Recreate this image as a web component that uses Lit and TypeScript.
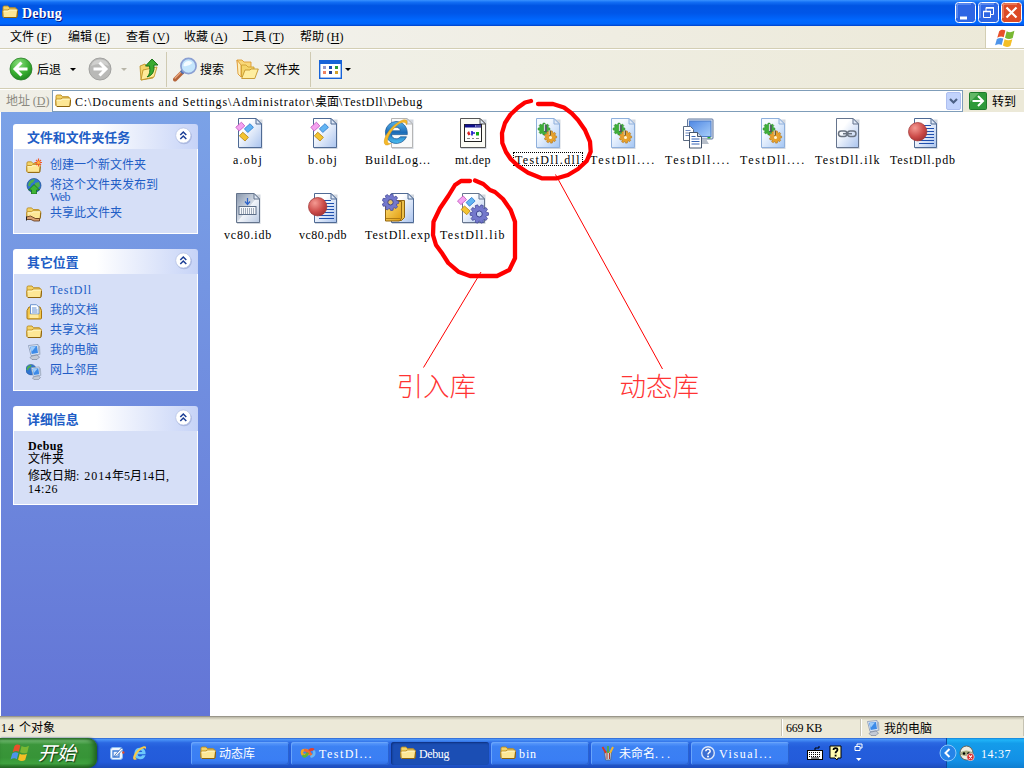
import { LitElement, html, svg, css, TemplateResult } from "lit";
import { customElement, property } from "lit/decorators.js";
import { classMap } from "lit/directives/class-map.js";

const pen = document.createElement("canvas").getContext("2d")!;

/* Half-width characters sit on a fixed cell; the spacing is derived from the natural width. */
function spacing(run: string, size: number, cell: number, bold: boolean): string {
  pen.font = `${bold ? "bold " : ""}${size}px "Liberation Serif"`;
  const n = run.length;
  return `letter-spacing:${((cell * n - pen.measureText(run).width) / n).toFixed(3)}px`;
}

function txt(text: string, size = 12, cell = 6, bold = false) {
  const runs = text.match(/[\x20-\x7e]+|[^\x20-\x7e]+/g) ?? [];
  return html`<span class="txt">${runs.map((r) =>
    /[\x20-\x7e]/.test(r) ? html`<span class="lat" style=${spacing(r, size, cell, bold)}>${r}</span>` : r
  )}</span>`;
}

const textStyles = css`
  .txt { white-space: pre; }
  .lat { font-family: "Liberation Serif", serif; }
  svg { display: block; flex: none; }
`;

function gear(cx: number, cy: number, r: number, teeth: number): string {
  const pts: string[] = [];
  for (let i = 0; i < teeth; i++) {
    const a = (i * 2 * Math.PI) / teeth;
    const s = Math.PI / teeth;
    for (const [o, k] of [[-0.75, 0.78], [-0.42, 1], [0.42, 1], [0.75, 0.78]]) {
      pts.push(`${(cx + Math.cos(a + o * s) * r * k).toFixed(2)},${(cy + Math.sin(a + o * s) * r * k).toFixed(2)}`);
    }
  }
  return pts.join(" ");
}

const page = (x: number, w = 23, tint = "url(#pg)", edge = "#4f6a94") => svg`
  <path d="M${x + 1} 2.5H${x + w + 1.5}V32H${x + 1}z" fill="#9aa5b5" opacity=".45"/>
  <path d="M${x + 0.5} 1.5H${x + w - 5}L${x + w + 0.5} 7V30.5H${x + 0.5}z" fill=${tint} stroke=${edge}/>
  <path d="M${x + w - 5} 1.5V7H${x + w + 0.5}z" fill="#dfe8f6" stroke=${edge}/>`;

const blocks = (x: number, y: number) => svg`
  <g stroke-width=".8">
    <rect x="-3.800" y="-2.500" width="7.600" height="5" fill="#f4a2f0" stroke="#c45cc0" transform="translate(${x + 1} ${y}) rotate(-42)"/>
    <rect x="-3.800" y="-2.500" width="7.600" height="5" fill="#62b4f2" stroke="#2f7ed0" transform="translate(${x + 9.6} ${y + 1.5}) rotate(-42)"/>
    <rect x="-3.800" y="-2.500" width="7.600" height="5" fill="#f4c430" stroke="#b8881c" transform="translate(${x + 4.6} ${y + 10}) rotate(42)"/>
  </g>`;

const dllArt = svg`
  ${page(4, 23, "url(#pgb)", "#8fb0dc")}
  <polygon points=${gear(12, 12, 6, 8)} fill="#3fae3a" stroke="#2c8a30" stroke-width=".5"/>
  <polygon points=${gear(18.5, 20, 6.2, 9)} fill="#e6a02c" stroke="#a66c14" stroke-width=".5"/>
  <circle cx="18.500" cy="20.500" r="1.500" fill="#fff6d8"/>
  <path d="M13.500 8v7" stroke="#4a5560" stroke-width="2.500"/><path d="M12.500 7v7" stroke="#d0d6dc" stroke-width="1.200"/>
  <path d="M18 13.500v5" stroke="#6e5c34" stroke-width="2"/><path d="M17.300 13.500v4.500" stroke="#e4d8b8"/>`;

const pdbArt = svg`
  ${page(7, 22)}
  <path d="M17 8.500h7M17 11.500h10M17 14.500h10M17 17.500h10M17 20.500h10M12 23.500h15M12 26.500h15" stroke="#1f4fae" stroke-width="1.200"/>
  <circle cx="10.700" cy="14.700" r="9.200" fill="url(#red)" stroke="#a33a3a" stroke-width=".8"/>`;

const fileArt: Record<string, TemplateResult> = {
  obj: svg`${page(6)}${blocks(7.3, 9.6)}`,
  html: svg`
    ${page(9, 21, "#fafafa", "#b5b5b5")}
    <path fill-rule="evenodd" d="M14 4.500a11 11 0 1 0 10.500 15.300h-6.200c-1.200 1.500-2.500 2-4.200 2-2.600 0-4.400-1.700-4.600-4.200h15.800c.5-8-4.600-13.100-11.300-13.100zm-4.500 9.300c.5-2.200 2.200-3.600 4.500-3.600s4 1.400 4.400 3.600z" fill="url(#ie)" stroke="#14508e" stroke-width=".7"/>
    <path d="M24.500 8c2-5-1-7-7-3.500C9 9 .5 21 2.500 26.500c1 2.500 4 1.500 6.500 0C3.500 27.500 4.500 21 11 12.500c5-6.300 12.500-10.300 13.500-4.500z" fill="#f5b92a" stroke="#cd8d10" stroke-width=".4"/>`,
  dep: svg`
    ${page(3, 25, "#fbfbf5", "#555")}
    <rect x="7.500" y="7.500" width="17" height="17" fill="#fff" stroke="#222"/>
    <path d="M8 9h16" stroke="#10108c" stroke-width="3"/><path d="M18 9h1.500M20.500 9h1M22.500 9h1" stroke="#fff"/>
    <path d="M10 16l2-2 1.500 3.500-2 1z" fill="#d22"/><path d="M15 14v4.500M15 16h3" stroke="#22c" stroke-width="1.700"/><path d="M19 15h3v3.500h-3z" fill="#1a1"/>
    <path d="M10 21.500h3M15 21.500h2M19 21.500h3" stroke="#888"/>`,
  dll: dllArt,
  mon: svg`
    <rect x="5.500" y="2" width="25.500" height="20" rx="1" fill="#dfe6f2" stroke="#60789f"/>
    <rect x="7.500" y="4" width="21.500" height="15.500" fill="url(#scr)" stroke="#4d7cc8"/>
    <path d="M25.500 20.700h3" stroke="#2ea82e" stroke-width="1.500"/>
    <path d="M15 22h9l3 5h-12z" fill="#b7bfca"/>
    <path d="M1.500 9.500h7l3 3v11h-10z" fill="#fff" stroke="#5b6b82"/><path d="M3.500 13.500h5M3.500 16h6M3.500 18.500h6" stroke="#6d87bc"/>
    <path d="M7.500 15.500h8l4 4v11.500h-12z" fill="#fff" stroke="#45556c"/><path d="M15.500 15.500v4h4" fill="#cdd8ea" stroke="#45556c"/>
    <path d="M9.500 19.500h4M9.500 22h8M9.500 24.500h8M9.500 27h8" stroke="#3965b4"/>`,
  ilk: svg`
    ${page(4, 22, "url(#pg)", "#66758e")}
    <g fill="none" stroke="#6a7380" stroke-width="1.500"><rect x="6.500" y="14" width="8.500" height="5.500" rx="2.700"/><rect x="15.500" y="14" width="8.500" height="5.500" rx="2.700"/><path d="M11 16.700h9"/></g>`,
  pdb: pdbArt,
  idb: svg`
    ${page(4, 23, "url(#gry)", "#64748c")}
    <rect x="7" y="14.500" width="17" height="8" fill="#f6f8fb" stroke="#5d6f88"/>
    <path d="M9 17h13M9 19h13M9 21h13" stroke="#4a5c76" stroke-dasharray="1 1"/>
    <path d="M15.500 6v6M13 9.500l2.500 3 2.500-3" fill="none" stroke="#2c62c8" stroke-width="1.200"/>`,
  exp: svg`
    ${page(9, 22)}
    <path d="M6.500 8.500h16v17l-3 3h-13z" fill="#ecc04a" stroke="#8f6512"/>
    <path d="M3.500 11.500l2-2h14v17l-2 2.500h-14z" fill="url(#gold)" stroke="#936711"/>
    <path d="M4 26.500h14.500" stroke="#b07c14"/>
    <polygon points=${gear(8.5, 10.3, 8.3, 9)} fill="#7378cc" stroke="#3d4290" stroke-width=".7"/>
    <circle cx="8.500" cy="10.300" r="2.700" fill="#e5c36a" stroke="#3d4290"/>`,
  lib: svg`
    ${page(5, 22, "url(#pg)", "#66758e")}${blocks(4, 8.3)}
    <polygon points=${gear(22.3, 22, 9.3, 10)} fill="#7378cc" stroke="#3d4290" stroke-width=".7"/>
    <circle cx="22.300" cy="22" r="3" fill="#c4d4f2" stroke="#3d4290"/>`,
};

const defs = svg`<defs>
  <linearGradient id="pg" x1="0" y1="0" x2="1" y2="1"><stop offset=".3" stop-color="#fff"/><stop offset="1" stop-color="#a9c3ee"/></linearGradient>
  <linearGradient id="pgb" x1="0" y1="0" x2="1" y2="1"><stop offset=".3" stop-color="#f6faff"/><stop offset="1" stop-color="#a4c6f4"/></linearGradient>
  <linearGradient id="gry" x1="0" y1="0" x2="1" y2="1"><stop offset="0" stop-color="#8695ac"/><stop offset=".5" stop-color="#d3dae4"/><stop offset=".52" stop-color="#f2f5fa"/><stop offset="1" stop-color="#b9c9e2"/></linearGradient>
  <linearGradient id="gold" x1="0" y1="0" x2="1" y2="1"><stop offset="0" stop-color="#ffe27a"/><stop offset="1" stop-color="#e09a0c"/></linearGradient>
  <linearGradient id="ie" x1="0" y1="0" x2="0" y2="1"><stop offset="0" stop-color="#58b4ec"/><stop offset=".5" stop-color="#1c6cb8"/><stop offset="1" stop-color="#4cc0f2"/></linearGradient>
  <linearGradient id="scr" x1="0" y1="0" x2="1" y2="1"><stop offset="0" stop-color="#4f88e4"/><stop offset="1" stop-color="#a8cefa"/></linearGradient>
  <radialGradient id="red" cx=".35" cy=".3" r=".8"><stop offset="0" stop-color="#f49a92"/><stop offset=".6" stop-color="#cc4b49"/><stop offset="1" stop-color="#9e2e30"/></radialGradient>
</defs>`;

const folder = svg`
  <path d="M1 12.500V3.300Q1 2 2.200 2H6l1.500 1.700h5.500q1.200 0 1.200 1.200V7H1z" fill="#f4d366" stroke="#b98a20" stroke-width=".9"/>
  <path d="M.8 7.200q0-1.200 1.200-1.200h4l1-1h7.300q1.200 0 1.200 1.200l-.6 6.300q-.1 1-1.100 1H2.300q-1 0-1.100-1z" fill="#fde795" stroke="#b98a20" stroke-width=".9"/>
  <path d="M1.800 7.200h4.700l1-1h7" fill="none" stroke="#fff8cc" stroke-width=".9"/>
  <path d="M2 13.500h12.200q.8 0 .9-1l.5-5.500" fill="none" stroke="#8e640c"/>`;

const flag = svg`
  <path d="M3.500 3.200C5.500 1.500 7 2 8.300 2.800L7 8C5.500 7 4 7.200 2 8.300z" fill="#e8502a"/>
  <path d="M9.300 3.300c2 1 3.500 1 6-.3L14 8.500c-2 1-4 1-6-.2z" fill="#79b833"/>
  <path d="M1.700 9.300C3.500 8.200 5 8.200 6.700 9L5.400 14C4 13 2.500 13 .3 14.200z" fill="#4d94ea"/>
  <path d="M7.700 9.500c2 1 3.700 1 6 0l-1.500 5.200c-2 1-3.700 1-5.800-.3z" fill="#f4bf25"/>`;

const computer = svg`
  <path d="M2.500 1.500l9.500-1 1.500 10-8.500 1z" fill="#e4ecf8" stroke="#8496b4" stroke-width=".8"/>
  <path d="M4 2.700l7-.7 1 7-6.300.9z" fill="#3d8be8"/><path d="M4.500 3l5.500-.5-4.500 5.500z" fill="#9ccbfa"/>
  <path d="M12 1.500l2 .5 .5 8.500-1.500 .5z" fill="#aab6ca"/>
  <path d="M6 12l5-1 2.500 2-2.500 2.500H6L4 13.500z" fill="#c3cad6" stroke="#78849a" stroke-width=".7"/>`;

const globe = svg`<circle cx="8" cy="7.500" r="7" fill="#2f74d0" stroke="#1c4f94" stroke-width=".7"/><path d="M3 4q3-3.500 6-2.500l-2 3-2 1-1 3-2-1zM9 5l4-1 1 4-3 3-2-2z" fill="#4fb04a"/>`;

const ieSmall = svg`
  <path fill-rule="evenodd" d="M8 2.800a5.700 5.700 0 1 0 5.500 7.500h-3.300q-.7 1.200-2.200 1.200-2.200 0-2.400-2.300h8C13.900 5 11.300 2.800 8 2.800zM5.700 7q.4-1.800 2.300-1.800T10.300 7z" fill="#6cc8fc"/>
  <path d="M13.500 4.500C15.500.5 12 .5 8 3 3.500 6 0 12 1.500 14.300c1 1.200 3 .2 4-.5C2.500 14 3.500 10.500 6.500 7c3-3.500 7-5 7-2.500z" fill="#f7c948"/>`;

const small: Record<string, TemplateResult> = {
  folder,
  computer,
  flag,
  ie: ieSmall,
  newf: svg`<g transform="translate(0 2) scale(.92)">${folder}</g><path d="M12.500 .5v8M8.500 4.500h8M10 2l5 5M15 2l-5 5" stroke="#f05a28" stroke-width="1.200"/><circle cx="12.500" cy="4.500" r="1.500" fill="#ffb03a"/>`,
  web: svg`${globe}<path d="M8 6.500l5.500 5.500h-3v4h-5v-4h-3z" fill="#3fb436" stroke="#177018" stroke-width=".8"/>`,
  share: svg`<g transform="scale(.95)">${folder}</g><path d="M.5 11l4-1 5 2.500h4v2.500H8l-3-1.500H.5z" fill="#d8a070" stroke="#5c3416" stroke-width=".8"/><path d="M0 10.500v4" stroke="#222" stroke-width="2"/>`,
  docs: svg`<path d="M1 6.500L3 3h11l1.500 3.500V14q0 1-1 1H2q-1 0-1-1z" fill="#f2c74e" stroke="#a8760e"/><path d="M4.500 .7h6l2.500 2.500V10h-8.500z" fill="#fff" stroke="#6d94cf"/><path d="M6 4h4.500M6 6h5.500M6 8h5.500" stroke="#5d8cd4"/><path d="M3.500 10.500h9v3.500h-9z" fill="#ffeaa0"/>`,
  net: svg`<g transform="translate(-1 0) scale(.75)">${globe}</g><g transform="translate(3 2.500) scale(.85)">${computer}</g>`,
  desk: svg`<rect x="1.500" y="2.500" width="12" height="12" rx="2.500" fill="#eef6ff" stroke="#8cbcf0"/><path d="M4 6h6v6H4z" fill="none" stroke="#3d7ed8" stroke-width="1.300"/><path d="M6 10l6.500-7 1.500 1.500-6.500 6.500-2 .5z" fill="#fff" stroke="#2d65b5" stroke-width=".8"/><circle cx="14.300" cy="7.500" r="1.200" fill="#e84c2a"/>`,
  vs: svg`<g fill="none" stroke-width="2.600" stroke-linecap="round"><path d="M7 9.500Q2.500 11 2 8T5 5t4 4" stroke="#f5a623"/><path d="M7 9q3-5.500 6-4.500" stroke="#e8402a"/><path d="M5 5q4 1 7 6" stroke="#f06a32"/><path d="M14 6.500q1 4-2.500 5" stroke="#6ab8f0"/><path d="M3.500 11q1.500 1.500 4-2.500" stroke="#58b838"/></g>`,
  paint: svg`<path d="M4.500 7h7l-.8 8H5.500z" fill="#c8d4e2" stroke="#56647a" stroke-width=".8"/><path d="M6 8L2.500 2" stroke="#d8381c" stroke-width="1.800"/><path d="M8 8V1" stroke="#4eae3c" stroke-width="1.800"/><path d="M10 8l3-6" stroke="#f5b62c" stroke-width="2"/><path d="M7 8v6M9.500 8v6" stroke="#b03a28"/>`,
  help: svg`<circle cx="8" cy="8" r="6.300" fill="#3c6fd2" stroke="#dbe7fb" stroke-width="1.400"/><path d="M5.800 6.200q.2-2 2.200-2t2.200 1.800q0 1.200-1.300 1.900Q8 8.500 8 9.500" fill="none" stroke="#fff" stroke-width="1.500"/><circle cx="8" cy="11.500" r="1" fill="#fff"/>`,
};

const ico = (name: string, size = 16) => html`<svg width=${size} height=${size} viewBox="0 0 16 16">${small[name]}</svg>`;

@customElement("task-panel")
class TaskPanel extends LitElement {
  @property() heading = "";
  static styles = [textStyles, css`
    :host { display: block; color: #215dc6; }
    .head { height: 25px; display: flex; align-items: center; justify-content: space-between; padding: 0 6px 0 14px; border-radius: 3px 3px 0 0; background: linear-gradient(90deg, #fff 0 45%, #c6d3f7 100%); font-weight: 700; font-size: 12.9px; box-sizing: border-box; }
    .body { background: #d6dff7; border: 1px solid #fff; border-top: 0; box-sizing: border-box; height: calc(100% - 25px); }
  `];
  render() {
    return html`
      <div class="head"><span>${this.heading}</span>
        <svg width="17" height="20" viewBox="0 0 17 20"><circle cx="9" cy="9.500" r="7.800" fill="#8f9fcf" opacity=".6"/><circle cx="8.300" cy="8.500" r="7.600" fill="#fff" stroke="#b8c4e4" stroke-width=".8"/><path d="M5.300 8l3-3 3 3M5.300 12l3-3 3 3" fill="none" stroke="#1a3d95" stroke-width="1.500"/></svg>
      </div>
      <div class="body"><slot></slot></div>`;
  }
}

@customElement("file-item")
class FileItem extends LitElement {
  @property() name = "";
  @property() kind = "";
  @property({ type: Boolean }) focused = false;
  static styles = [textStyles, css`
    :host { display: flex; flex-direction: column; align-items: center; }
    .label { margin-top: 3px; height: 14px; line-height: 12px; padding: 0 1px; border: 1px solid transparent; box-sizing: border-box; white-space: nowrap; }
    .on { border: 1px dotted #000; }
  `];
  render() {
    return html`<svg width="32" height="32" viewBox="0 0 32 32">${defs}${fileArt[this.kind]}</svg>
      <div class=${classMap({ label: true, on: this.focused })}>${txt(this.name)}</div>`;
  }
}

const files: [string, string][] = [
  ["a.obj", "obj"], ["b.obj", "obj"], ["BuildLog...", "html"], ["mt.dep", "dep"], ["TestDll.dll", "dll"],
  ["TestDll....", "dll"], ["TestDll....", "mon"], ["TestDll....", "dll"], ["TestDll.ilk", "ilk"], ["TestDll.pdb", "pdb"],
  ["vc80.idb", "idb"], ["vc80.pdb", "pdb"], ["TestDll.exp", "exp"], ["TestDll.lib", "lib"],
];
const menus = [["文件", "F"], ["编辑", "E"], ["查看", "V"], ["收藏", "A"], ["工具", "T"], ["帮助", "H"]];
const places = [["folder", "TestDll"], ["docs", "我的文档"], ["folder", "共享文档"], ["computer", "我的电脑"], ["net", "网上邻居"]];
const tasks = [["folder", "动态库"], ["vs", "TestDl..."], ["folder", "Debug"], ["folder", "bin"], ["paint", "未命名..."], ["help", "Visual..."]];

@customElement("app-root")
class AppRoot extends LitElement {
  static styles = [textStyles, css`
    :host { display: flex; flex-direction: column; position: relative; width: 1024px; height: 768px; overflow: hidden; background: #fff; font: 12px/14px "Noto Sans CJK SC", sans-serif; color: #000; }
    .title { height: 26px; box-sizing: border-box; display: flex; align-items: center; padding: 0 2px 2px; background: linear-gradient(#3a93ff 0, #1470f5 8%, #0054e3 22%, #0056e8 50%, #0068ff 78%, #0066fb 92%, #0040c8 100%); color: #fff; font-weight: 700; }
    .title .name { flex: 1; margin-left: 4px; padding-top: 2px; font-size: 14px; text-shadow: 1px 1px #0a1883; }
    .wb { display: flex; gap: 2px; }
    .menu { height: 23px; display: flex; background: linear-gradient(90deg, #f4f4f2, #efede2 60%, #ece9d8); border-bottom: 1px solid #d3ceb4; box-sizing: border-box; }
    .menu .items { flex: 1; display: grid; grid-template-columns: repeat(6, 58px); padding: 0 0 1px 10px; align-items: center; }
    .menu u { text-underline-offset: 2px; }
    .brand { width: 38px; border-left: 1px solid #d3ceb4; background: #fff; display: flex; align-items: center; justify-content: center; }
    .tools { height: 40px; box-sizing: border-box; display: flex; align-items: center; padding-left: 9px; border-top: 1px solid #fff; border-bottom: 1px solid #d3ceb4; background: linear-gradient(90deg, #f3f3f0, #efeee3 50%, #ece9d8); }
    .tools span { padding-bottom: 1px; }
    .sep { width: 1px; height: 35px; background: #cfcab2; }
    .tools .arr { border: 3px solid transparent; border-top-color: #000; border-bottom: 0; }
    .tools .dim { border-top-color: #b8b5a8; }
    .g5 { margin-left: 5px; } .g9 { margin-left: 9px; } .g12 { margin-left: 12px; }
    .addr { height: 23px; display: flex; box-sizing: border-box; align-items: stretch; background: linear-gradient(90deg, #f0efe7, #ece9d8); border-top: 1px solid #fff; }
    .addr .cap { width: 52px; padding: 3px 0 0 6px; box-sizing: border-box; color: #8b8980; }
    .field { width: 911px; box-sizing: border-box; border: 1px solid #7f9db9; background: #fff; display: flex; align-items: center; padding: 0 1px 0 2px; }
    .field .path { flex: 1; margin-left: 4px; }
    .go { display: flex; align-items: center; gap: 5px; padding-left: 6px; }
    .go span { padding-bottom: 1px; }
    .main { flex: 1; display: flex; min-height: 0; }
    .side { width: 209px; margin-left: 1px; box-sizing: border-box; padding: 12px 12px 0; background: linear-gradient(#7ba2e7, #6375d6); display: flex; flex-direction: column; gap: 15px; }
    .p1 { height: 110px; } .p2 { height: 142px; } .p3 { height: 99px; }
    .link { display: flex; gap: 8px; padding-left: 12px; line-height: 12px; }
    .p1 .list { padding-top: 9px; display: flex; flex-direction: column; gap: 4px; }
    .p1 .link:last-child { margin-top: -1px; }
    .p2 .list { padding-top: 5px; display: flex; flex-direction: column; }
    .p2 .link { height: 20px; align-items: center; }
    .p2 svg { margin-top: 5px; }
    .link span.wrap { width: 110px; }
    .info { padding: 10px 0 0 14px; color: #000; line-height: 12px; }
    .info .date { margin-top: 5px; }
    .info .nm { font: bold 12px/11px "Liberation Serif", serif; }
    .files { flex: 1; padding: 5px 0 0 0.5px; display: grid; grid-template-columns: repeat(10, 75px); grid-auto-rows: 75px; }
    .status { height: 22px; box-sizing: border-box; display: flex; align-items: center; background: linear-gradient(#b9b6a4 0, #ece9d8 3px); border-top: 1px solid #9a978a; }
    .status .cell { box-sizing: border-box; height: 17px; display: flex; align-items: center; gap: 3px; border-left: 1px solid #c5c2b2; box-shadow: inset 1px 0 #fff; padding-left: 4px; }
    .status .count { flex: 1; border: 0; box-shadow: none; padding-left: 1px; }
    .status .size { width: 79px; } .status .zone { width: 164px; padding-left: 4px; border-right: 1px solid #c5c2b2; }
    .bar { height: 30px; display: flex; background: linear-gradient(#2d62cc 0, #4a94f8 5%, #2b68e2 16%, #245edc 30%, #235bda 80%, #1c4cba 100%); color: #fff; }
    .start { width: 97px; box-sizing: border-box; border-radius: 0 9px 9px 0; display: flex; align-items: center; padding: 0 0 3px 10px; gap: 8px; background: linear-gradient(#2c772c 0, #6cb86c 9%, #3b963b 22%, #379437 65%, #3fa33f 85%, #256a25 100%); box-shadow: inset -3px 0 5px #1e5f1e, 1px 0 2px #14388c; font: italic 400 19px/22px "Noto Sans CJK SC", sans-serif; text-shadow: 1px 1px 1px #143c14; }
    .quick { width: 94px; display: flex; align-items: center; gap: 7px; padding-left: 12px; box-sizing: border-box; }
    .tasks { width: 600px; display: grid; grid-template-columns: repeat(6, 98px); column-gap: 2px; padding: 4px 0 3px; box-sizing: border-box; }
    .task { display: flex; align-items: center; gap: 3px; padding: 0 0 1px 9px; border-radius: 3px; background: linear-gradient(#5e9dfd 0, #3c81f3 20%, #3a7ef4 80%, #2f6be0); box-shadow: inset 1px 1px #68a4fb, inset -1px -1px #2a62cf; overflow: hidden; }
    .task.active { background: #1b4eb4; box-shadow: inset 1px 1px 2px #0d2f7c; }
    .lang { flex: 1; display: flex; align-items: center; gap: 6px; padding-left: 16px; }
    .tray { width: 78px; box-sizing: border-box; display: flex; align-items: center; background: linear-gradient(#1580d8 0, #20b4f8 6%, #149cea 18%, #1290e6 75%, #0f7ed0 100%); border-left: 1px solid #0c47a0; }
    .tray .chev { margin-left: -8px; }
    .tray .clock { margin-left: 6px; }
    .marks { position: absolute; left: 0; top: 0; pointer-events: none; }
    .marks text { font: 300 26.5px "Noto Sans CJK SC", sans-serif; fill: #f33; }
  `];

  render() {
    return html`
      <div class="title">
        ${ico("folder")}<span class="name">${txt("Debug", 14, 8, true)}</span>
        <div class="wb">
          <svg width="21" height="21" viewBox="0 0 21 21"><rect x=".5" y=".5" width="20" height="20" rx="3" fill="#2e66e4" stroke="#fff"/><path d="M2 16V4q0-2 2-2h12" stroke="#80a8fa" fill="none"/><path d="M5 14.500h7v3H5z" fill="#fff"/></svg>
          <svg width="21" height="21" viewBox="0 0 21 21"><rect x=".5" y=".5" width="20" height="20" rx="3" fill="#2e66e4" stroke="#fff"/><path d="M2 16V4q0-2 2-2h12" stroke="#80a8fa" fill="none"/><path d="M8 9V5.500h7.500v7H13M5.500 9.500H12.500v6H5.500z" fill="none" stroke="#fff"/><path d="M8 6h8M5 9.500h8" stroke="#fff" stroke-width="1.600"/></svg>
          <svg width="21" height="21" viewBox="0 0 21 21"><rect x=".5" y=".5" width="20" height="20" rx="3" fill="#dc4a26" stroke="#fff"/><path d="M2 16V4q0-2 2-2h12" stroke="#f4a184" fill="none"/><path d="M5.500 5.500l10 10M15.500 5.500l-10 10" stroke="#fff" stroke-width="2.200"/></svg>
        </div>
      </div>
      <div class="menu">
        <div class="items">${menus.map(([m, k]) => html`<span>${m} <span class="lat">(<u>${k}</u>)</span></span>`)}</div>
        <div class="brand"><svg width="22" height="20" viewBox="0 0 16 15.500">${flag}</svg></div>
      </div>
      <div class="tools">
        <svg width="24" height="24" viewBox="0 0 24 24"><defs><radialGradient id="gb" cx=".4" cy=".25" r=".8"><stop offset="0" stop-color="#8ade7c"/><stop offset=".6" stop-color="#38ae30"/><stop offset="1" stop-color="#1d8420"/></radialGradient></defs><circle cx="12" cy="12" r="11" fill="url(#gb)" stroke="#2a7d28" stroke-width=".8"/><path d="M12.500 5.500L6 12l6.500 6.500M6.500 12H18.500" fill="none" stroke="#fff" stroke-width="3"/></svg>
        <span style="margin-left:4px">后退</span><i class="arr g9"></i>
        <svg class="g12" width="24" height="24" viewBox="0 0 24 24"><circle cx="12" cy="12" r="11" fill="#b9b9b7" stroke="#a2a2a0"/><path d="M3 9a9.500 9.500 0 0 1 18 0q-9-4-18 0z" fill="#d0d0ce"/><path d="M11.500 5.500L18 12l-6.500 6.500M17.500 12H5.500" fill="none" stroke="#fff" stroke-width="3"/></svg>
        <i class="arr dim" style="margin-left:9px"></i>
        <svg class="g12" width="21" height="23" viewBox="0 0 21 23"><path d="M1 8l5-2 2 2 6-1v13L2 22z" fill="#f5d469" stroke="#b98b1c" stroke-width=".8"/><path d="M4 12l14-3-3 10L2 22z" fill="#ffeb99" stroke="#b98b1c" stroke-width=".8"/><path d="M8 19q4-3 2.500-11H6.500L13 1l6 6h-4q1 10-7 12z" fill="#3aaa30" stroke="#1c751b"/></svg>
        <i class="sep" style="margin-left:6px"></i>
        <svg style="margin-left:6px" width="25" height="25" viewBox="0 0 25 25"><path d="M2 22.500L10.500 14" stroke="#b4643a" stroke-width="4" stroke-linecap="round"/><path d="M1.700 21.500L9 14" stroke="#eaa77c" stroke-width="1.200"/><path d="M8.500 16l2.500-3" stroke="#4d72b6" stroke-width="4"/><circle cx="15.500" cy="9" r="7.600" fill="#c4e6fc" stroke="#8a9fd2" stroke-width="1.700"/><path d="M10.500 9a5 5 0 0 1 9-3q-4 4-9 3z" fill="#f4fcff"/></svg>
        <span style="margin-left:2px">搜索</span>
        <svg class="g12" width="23" height="22" viewBox="0 0 23 22"><path d="M1 2h5l2 2h7v10L3 17z" fill="#f9d778" stroke="#dd9a35" stroke-width=".9"/><path d="M1 2l4 5v12l-3-3z" fill="#ffefb8" stroke="#dd9a35" stroke-width=".9"/><path d="M5.500 19V7H10l2 2h6v3l-2 7z" fill="#f5d469" stroke="#cfa030" stroke-width=".9"/><path d="M9 12h5l1-1h7.300l-3.500 9.500H5.700z" fill="#ffeea0" stroke="#c4942a" stroke-width=".9"/></svg>
        <span class="g5">文件夹</span>
        <i class="sep" style="margin-left:10px"></i>
        <svg style="margin-left:8px" width="23" height="19" viewBox="0 0 23 19"><rect x=".7" y=".7" width="21.600" height="17.600" fill="#fff" stroke="#1763d8" stroke-width="1.400"/><path d="M0 2h23" stroke="#1763d8" stroke-width="4"/><g><path d="M4 6h3v3H4z" fill="#9899cc"/><path d="M10 6h3v3h-3z" fill="#1b50b8"/><path d="M16 6h3v3h-3z" fill="#2c9c34"/><path d="M4 11h3v3H4z" fill="#ef8262"/><path d="M10 11h3v3h-3z" fill="#1e3f93"/><path d="M16 11h3v3h-3z" fill="#d3a02c"/></g></svg>
        <i class="arr" style="margin-left:3px"></i>
      </div>
      <div class="addr">
        <div class="cap">地址 <span class="lat">(<u>D</u>)</span></div>
        <div class="field">${ico("folder")}<span class="path">${txt("C:\\Documents and Settings\\Administrator\\桌面\\TestDll\\Debug")}</span>
          <svg width="15" height="18" viewBox="0 0 15 18"><rect x=".5" y=".5" width="14" height="17" rx="1.500" fill="#c2d3fc" stroke="#aebff0"/><path d="M4 7l3.500 3.500L11 7" fill="none" stroke="#4d6185" stroke-width="2.200"/></svg>
        </div>
        <div class="go"><svg width="18" height="18" viewBox="0 0 18 18"><rect x=".5" y=".5" width="17" height="17" rx="1" fill="#2f9a3a" stroke="#1e7a2a"/><path d="M1 1h9L1 10z" fill="#62b866"/><path d="M3.500 9H14M9 4l5 5-5 5" fill="none" stroke="#fff" stroke-width="2"/></svg><span>转到</span></div>
      </div>
      <div class="main">
        <div class="side">
          <task-panel class="p1" heading="文件和文件夹任务"><div class="list">
            <div class="link">${ico("newf")}<span>创建一个新文件夹</span></div>
            <div class="link">${ico("web")}<span class="wrap">将这个文件夹发布到<br />${txt("Web", 11)}</span></div>
            <div class="link">${ico("share")}<span>共享此文件夹</span></div>
          </div></task-panel>
          <task-panel class="p2" heading="其它位置"><div class="list">
            ${places.map(([i, t]) => html`<div class="link">${ico(i)}${txt(t)}</div>`)}
          </div></task-panel>
          <task-panel class="p3" heading="详细信息"><div class="info">
            <div class="nm">${txt("Debug", 12, 7, true)}</div><div>文件夹</div>
            <div class="date">${txt("修改日期: 2014年5月14日,")}</div><div>${txt("14:26")}</div>
          </div></task-panel>
        </div>
        <div class="files">${files.map(([n, k], i) => html`<file-item name=${n} kind=${k} ?focused=${i === 4}></file-item>`)}</div>
      </div>
      <div class="status">
        <div class="cell count">${txt("14 个对象")}</div>
        <div class="cell size">${txt("669 KB")}</div>
        <div class="cell zone">${ico("computer")}<span>我的电脑</span></div>
      </div>
      <div class="bar">
        <div class="start"><svg width="20" height="19" viewBox="0 0 16 15.500">${flag}</svg><span>开始</span></div>
        <div class="quick">${ico("desk")}${ico("ie")}</div>
        <div class="tasks">${tasks.map(([i, t]) => html`<div class=${classMap({ task: true, active: t === "Debug" })}>${ico(i)}${txt(t)}</div>`)}</div>
        <div class="lang">
          <svg width="16" height="14" viewBox="0 0 16 14"><path d="M8 4V2h4V0" fill="none" stroke="#000"/><rect x=".5" y="4.500" width="15" height="9" fill="#fff" stroke="#000"/><path d="M2 6.500h12M2 8.500h12M2 10.500h12" stroke="#000" stroke-dasharray="1 1"/><path d="M4 12h8" stroke="#000"/></svg>
          <svg width="14" height="16" viewBox="0 0 14 16"><path d="M1 1h11v12H9l-1 2-2-2H1z" fill="#fffbb0" stroke="#000"/><path d="M4.500 5q0-1.800 2-1.800t2 1.600q0 1-1 1.700-1 .7-1 1.800" fill="none" stroke="#000" stroke-width="1.700"/><path d="M5.700 9.700h1.800v1.800H5.700z"/></svg>
          <svg style="margin-left:5px" width="9" height="20" viewBox="0 0 9 20"><path d="M3 3V1h5v4H6M1 3.500h5v4H1z" fill="none" stroke="#fff"/><path d="M2 15h5.500L4.700 18z" fill="#fff"/></svg>
        </div>
        <div class="tray">
          <svg class="chev" width="18" height="18" viewBox="0 0 18 18"><circle cx="9" cy="9" r="8" fill="#2583e8" stroke="#8cc8fa"/><path d="M10.500 5L6.500 9l4 4" fill="none" stroke="#fff" stroke-width="2"/></svg>
          <svg style="margin-left:2px" width="16" height="16" viewBox="0 0 16 16"><ellipse cx="7.500" cy="8" rx="6.500" ry="7" fill="#f1eee2" stroke="#64635a"/><path d="M2 7q5-3 11 0v3q-5 2-11 0z" fill="#a8ad82"/><circle cx="5" cy="8.500" r="1.200"/><circle cx="9.500" cy="8.500" r="1.200"/><circle cx="11.500" cy="12" r="3.700" fill="#d82a2a" stroke="#fff" stroke-width=".6"/><path d="M10 10.500l3 3M13 10.500l-3 3" stroke="#fff" stroke-width="1.200"/></svg>
          <span class="clock">${txt("14:37")}</span>
        </div>
      </div>
      <svg class="marks" width="1024" height="768" viewBox="0 0 1024 768">
        <g fill="none" stroke="#f00" stroke-width="4.300" stroke-linecap="round" stroke-linejoin="round">
          <path d="M531 101L525 102.500L518 107.500L510.500 114.500L505 123L502 133L502.300 143L506 152L510.700 159L518 166L528 172.700L541.700 178.300L557 178.300L568 175L578 169L586.700 161L590.700 151.700L590 141.700L585 130L578 120L571.700 113.300L564 107.500L553 104L538 104"/>
          <path d="M470 181L461 181L455 185L448.300 196L440 208.300L433.500 221.700L433 235L436 245L441.700 252.700L448.300 263L458.300 271.700L470 276L497 276L509.300 270L515 258.300L515 221.700L510.700 210L503 199L495 192L490 190L483.300 184L475 180.500"/>
        </g>
        <path d="M481 272L423.500 367.500M555.500 174.500L662.500 369" fill="none" stroke="#f00" stroke-width="1"/>
        <text x="396.500" y="396">引入库</text><text x="619.500" y="396">动态库</text>
      </svg>`;
  }
}
